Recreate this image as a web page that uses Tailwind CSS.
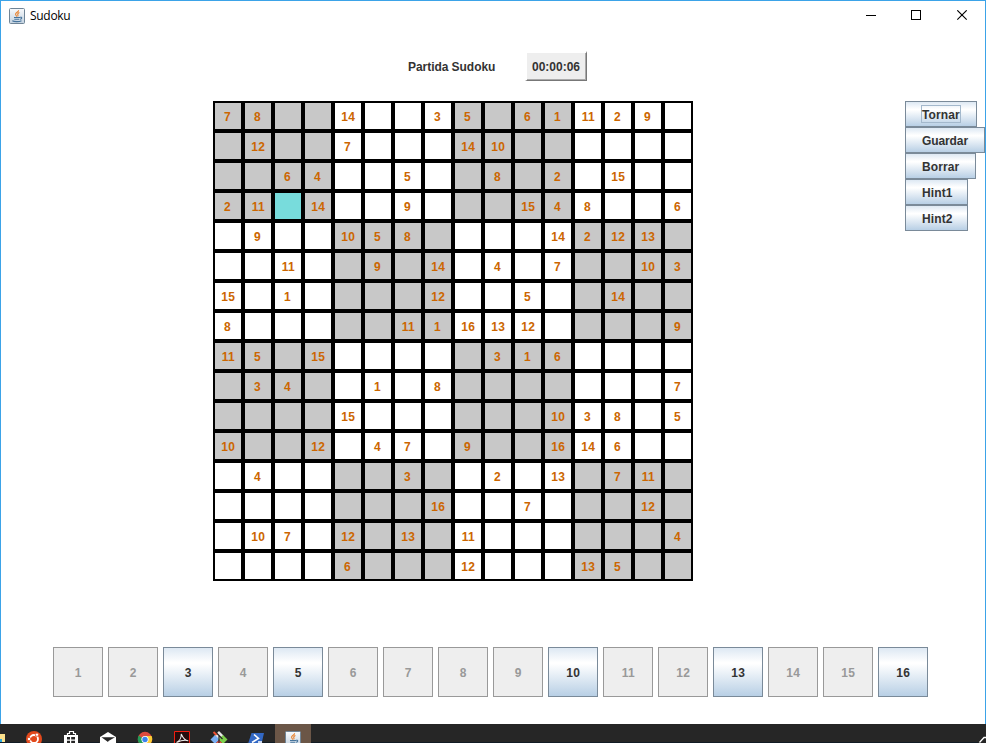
<!DOCTYPE html>
<html lang="ca">
<head>
<meta charset="utf-8">
<title>Sudoku</title>
<script src="https://cdn.jsdelivr.net/npm/@tailwindcss/browser@4"></script>
</head>
<body class="w-[986px] h-[743px] overflow-hidden bg-white font-['Liberation_Sans',Arial,sans-serif] text-[12px] leading-[14px] font-bold text-[#333]">
<svg class="absolute w-0 h-0">
  <linearGradient id="jg" x1="0" y1="0" x2="0" y2="1"><stop offset="0" stop-color="#f8fafc"/><stop offset="1" stop-color="#c3d2e0"/></linearGradient>
  <symbol id="java" viewBox="0 0 16 16">
    <rect x=".5" y=".5" width="15" height="15" rx="1" fill="url(#jg)" stroke="#6f8496"/>
    <path d="M9.6 2.3C9.8 4 6.4 4.6 6.6 6.3c.1.9 1 1.4 1.100 2.300M10.400 4.600C8.900 5.200 8.400 6 8.900 7c.3.6.1 1-.3 1.400" fill="none" stroke="#e8802c" stroke-width="1.100"/>
    <path d="M5 9.500h6M5.300 11.200h5M11 9.300c2.400-.5 2.200 1.600 0 2M3.300 12.800c2 1.200 7 1.100 9.200-.1" fill="none" stroke="#47749c" stroke-width="1.100"/>
  </symbol>
</svg>
<div class="flex flex-col h-full">
  <div class="flex flex-col h-[724px] border-t border-x border-[#3ba3e8]">
    <header class="flex h-[29px] items-center pl-2">
      <svg class="w-4 h-4"><use href="#java"/></svg>
      <span class="ml-[5px] font-['Open_Sans','Noto_Sans',sans-serif] text-[12px] font-normal text-black tracking-[-0.3px]">Sudoku</span>
      <svg class="ml-auto mr-[17px] w-[102px] h-[11px]" viewBox="0 0 102 11" fill="none" stroke="#000" shape-rendering="crispEdges">
        <path d="M0 5.5H10M45.5.5h9v9h-9z"/>
        <path d="M91.3.3l9.4 9.4M100.7.3l-9.4 9.4" shape-rendering="auto" stroke-width="1.1"/>
      </svg>
    </header>
    <div class="flex items-start h-[71px] pt-[21px] pl-[407px]">
      <span class="w-[117px] pt-[9px] whitespace-nowrap tracking-[-0.05px]">Partida Sudoku</span>
      <span class="flex items-center justify-center w-[62px] h-[30px] bg-[#eee] border-t-2 border-l-2 border-t-white border-l-white border-b border-r border-b-[#777] border-r-[#777] shadow-[inset_-1px_-1px_0_#aaa] pt-px pr-px">00:00:06</span>
    </div>
    <main class="flex items-start pl-[212px] gap-[212px] h-[546px]">
      <div id="board" class="grid grid-cols-[repeat(16,30px)] auto-rows-[30px] w-[480px] shrink-0 text-[#cc6600]"></div>
      <div id="actions" class="flex flex-col items-start shrink-0"></div>
    </main>
    <div id="pad" class="flex gap-[5px] pl-[52px]"></div>
  </div>
  <footer class="h-[19px] bg-[#262626]">
    <svg class="block w-[986px] h-[19px]" viewBox="0 724 986 19">
      <rect x="275" y="724" width="36" height="19" fill="#6b5647"/>
      <path d="M0 734h5v9H0z" fill="#fbe08c"/><path d="M0 739h2v4H0z" fill="#2ba8e0"/>
      <circle cx="34" cy="739" r="8" fill="#e2491c"/>
      <circle cx="34" cy="739" r="4" fill="none" stroke="#fff" stroke-width="1.8"/>
      <g fill="#fff" stroke="#e2491c" stroke-width=".8"><circle cx="29" cy="739" r="1.7"/><circle cx="37" cy="734.7" r="1.7"/></g>
      <path d="M67.500 735v-1.500h2v-2h4v2h2v1.500" fill="none" stroke="#fff" stroke-width="1.200"/>
      <path d="M64 735h14v8H64z" fill="#fff"/><path d="M67 737h3v2.500h-3zM71.200 737H75v2.500h-3.800zM67 740.700h3v2.300h-3zM71.200 740.700H75v2.300h-3.800z" fill="#262626"/>
      <path d="M100 737l8-5 8 5v6h-16z" fill="#fff"/><path d="M101.500 737.200h13.500l-6.500 3.800-.5 1z" fill="#262626"/>
      <circle cx="145" cy="739" r="7.200" fill="#dd4b3e"/><path d="M138.700 735.500A7.200 7.200 0 0 0 142 745.600L145 740z" fill="#239b56"/><path d="M145 736h6.600A7.200 7.200 0 0 1 146 746z" fill="#fccc35"/>
      <circle cx="145" cy="739.500" r="3.600" fill="#fff"/><circle cx="145" cy="739.500" r="2.700" fill="#3b82ed"/>
      <path d="M174.500 731.500h15v14h-15z" fill="#260d0d" stroke="#f21d10"/>
      <path d="M176.500 742.500c3-1.300 5-5 4.700-8.500 1.800 4 4 6.800 7 6.700-3-1-7-.4-11.700 1.800" fill="none" stroke="#eee" stroke-width="1.100"/>
      <path d="M219 731l4.500 4.500-4.500 4.500-4.500-4.500z" fill="#e8e8e8"/><path d="M215 735l4.500 4.500-4.500 4.500-4.500-4.500z" fill="#79aef2"/><path d="M223 735l4.500 4.500-4.500 4.500-4.500-4.500z" fill="#7ccf4b"/><path d="M219 740l4 4h-8z" fill="#ee5145"/><path d="M216 732.500l6.500 6.500M219 735.500v7.500" stroke="#262626" stroke-width="1.200"/><path d="M213.500 732l3 3" stroke="#f05133" stroke-width="2"/>
      <path d="M251.500 733H264l-2.500 11H248z" fill="#3268c4"/><path d="M254 734.500l4.500 4-6.500 4M258 742h4" fill="none" stroke="#fff" stroke-width="1.600"/>
      <use href="#java" x="285" y="731" width="16" height="16"/>
      <path d="M979.500 742.500l4.500-5h3" fill="none" stroke="#fff" stroke-width="1.300"/>
      <path d="M0 742.500h20M42 742.500h21M79 742.500h20M117 742.500h20M153 742.500h20M191 742.500h20M228 742.500h19M263 742.500h12M311 742.500h667" stroke="#111b24"/>
    </svg>
  </footer>
</div>
<script>
  const rows = [
    '7 8 . . 14 . . 3 5 . 6 1 11 2 9 .',
    '. 12 . . 7 . . . 14 10 . . . . . .',
    '. . 6 4 . . 5 . . 8 . 2 . 15 . .',
    '2 11 * 14 . . 9 . . . 15 4 8 . . 6',
    '. 9 . . 10 5 8 . . . . 14 2 12 13 .',
    '. . 11 . . 9 . 14 . 4 . 7 . . 10 3',
    '15 . 1 . . . . 12 . . 5 . . 14 . .',
    '8 . . . . . 11 1 16 13 12 . . . . 9',
    '11 5 . 15 . . . . . 3 1 6 . . . .',
    '. 3 4 . . 1 . 8 . . . . . . . 7',
    '. . . . 15 . . . . . . 10 3 8 . 5',
    '10 . . 12 . 4 7 . 9 . . 16 14 6 . .',
    '. 4 . . . . 3 . . 2 . 13 . 7 11 .',
    '. . . . . . . 16 . . 7 . . . 12 .',
    '. 10 7 . 12 . 13 . 11 . . . . . . 4',
    '. . . . 6 . . . 12 . . . 13 5 . .'
  ];
  const add = (id, cls, html) => {
    const el = document.createElement('div');
    el.className = cls;
    el.innerHTML = html;
    document.getElementById(id).append(el);
    return el;
  };
  rows.forEach((line, r) => line.split(' ').forEach((v, c) => {
    const bg = v === '*' ? 'bg-[#78dcdc]' : ((r >> 2) + (c >> 2)) % 2 ? 'bg-white' : 'bg-[#c8c8c8]';
    const pad = v.length > 1 ? 'pl-[0.6px] ' : 'pr-px ';
    add('board', 'flex items-center justify-center border-2 border-black pt-px tracking-[0.3px] ' + pad + bg, /\d/.test(v) ? v : '');
  }));
  const metal = ' border border-[#7a8a99] bg-[linear-gradient(#dde8f3_0%,#ffffff_30%,#ffffff_33%,#b8cfe5_100%)] ';
  [['Tornar', 72], ['Guardar', 80], ['Borrar', 71], ['Hint1', 63], ['Hint2', 63]].forEach(([t, w], i) => {
    const focus = i ? 'border-transparent' : 'border-[#a3b8cc]';
    const spacing = t === 'Guardar' ? ' tracking-[-0.1px]' : ' tracking-[0.1px]';
    add('actions', 'flex items-center h-[26px] pl-[15px]' + spacing + metal, `<span class="h-[18px] pt-[2px] border ${focus}">${t}</span>`).style.width = w + 'px';
  });
  const enabled = [3, 5, 10, 13, 16];
  for (let n = 1; n <= 16; n++)
    add('pad', 'flex items-center justify-center w-[50px] h-[50px] pt-px pl-[0.6px] tracking-[0.3px]' +
      (enabled.includes(n) ? metal : ' border border-[#999] bg-[#eee] text-[#999]'), n);
</script>
</body>
</html>
